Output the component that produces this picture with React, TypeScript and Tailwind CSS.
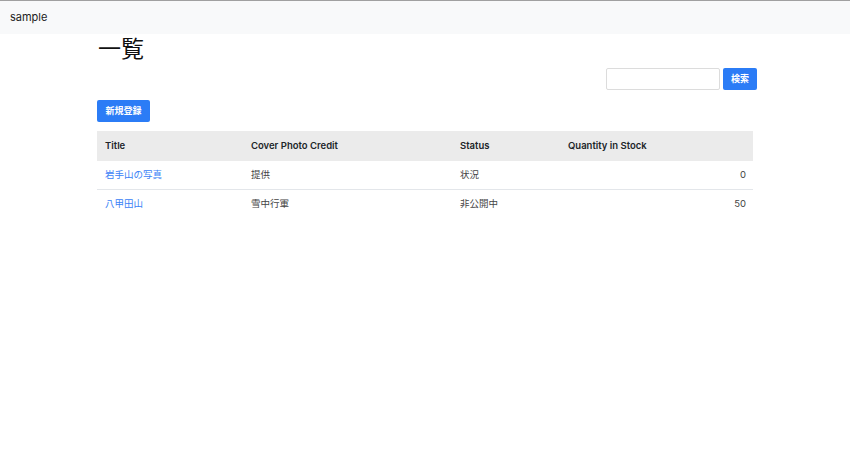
const rows = [
  { title: "岩手山の写真", credit: "提供", status: "状況", qty: 0 },
  { title: "八甲田山", credit: "雪中行軍", status: "非公開中", qty: 50 },
];

export default function App() {
  return (
    <div
      className="min-h-[466px] w-[850px] bg-white text-[#212529]"
      style={{ fontFamily: 'Inter, "Noto Sans CJK JP", sans-serif' }}
    >
      <nav className="flex h-[34px] items-center border-t border-t-[#a0a0a0] bg-[#f8f9fa] pl-[10px] text-[11px] text-[#222]">
        sample
      </nav>
      <main className="mx-auto w-[656px]">
        <h1 className="mt-[1px] h-[28px] pl-[1px] text-[23px] leading-[28px] text-[#111]">一覧</h1>
        <form className="-mr-[4px] mt-[5px] flex justify-end gap-[3px]">
          <input className="h-[22px] w-[114px] rounded-[2px] border border-[#dcdcdc] bg-white px-1 text-[10px] outline-none" />
          <button
            type="button"
            className="h-[22px] w-[34px] rounded-[2px] bg-[#2b7cf6] text-[9px] font-semibold text-white"
          >
            検索
          </button>
        </form>
        <button
          type="button"
          className="mt-[10px] h-[22px] w-[53px] rounded-[2px] bg-[#2b7cf6] text-[9px] font-semibold text-white"
        >
          新規登録
        </button>
        <table className="mt-[9px] w-full border-collapse text-[9.5px]">
          <thead>
            <tr className="h-[30px] bg-[#ebebeb] text-left">
              <th className="w-[154px] pl-[8px] font-semibold">Title</th>
              <th className="w-[209px] font-semibold">Cover Photo Credit</th>
              <th className="w-[108px] font-semibold">Status</th>
              <th className="font-semibold">Quantity in Stock</th>
            </tr>
          </thead>
          <tbody>
            {rows.map((r, i) => (
              <tr
                key={r.title}
                className={i === 0 ? "h-[28px] border-b border-b-[#e3e6ea]" : "h-[29px]"}
              >
                <td className="pl-[8px]">
                  <a href="#" className="text-[#3a82f6]">
                    {r.title}
                  </a>
                </td>
                <td className="text-[#444]">{r.credit}</td>
                <td className="text-[#444]">{r.status}</td>
                <td className="pr-[7px] text-right text-[#444]">{r.qty}</td>
              </tr>
            ))}
          </tbody>
        </table>
      </main>
    </div>
  );
}
